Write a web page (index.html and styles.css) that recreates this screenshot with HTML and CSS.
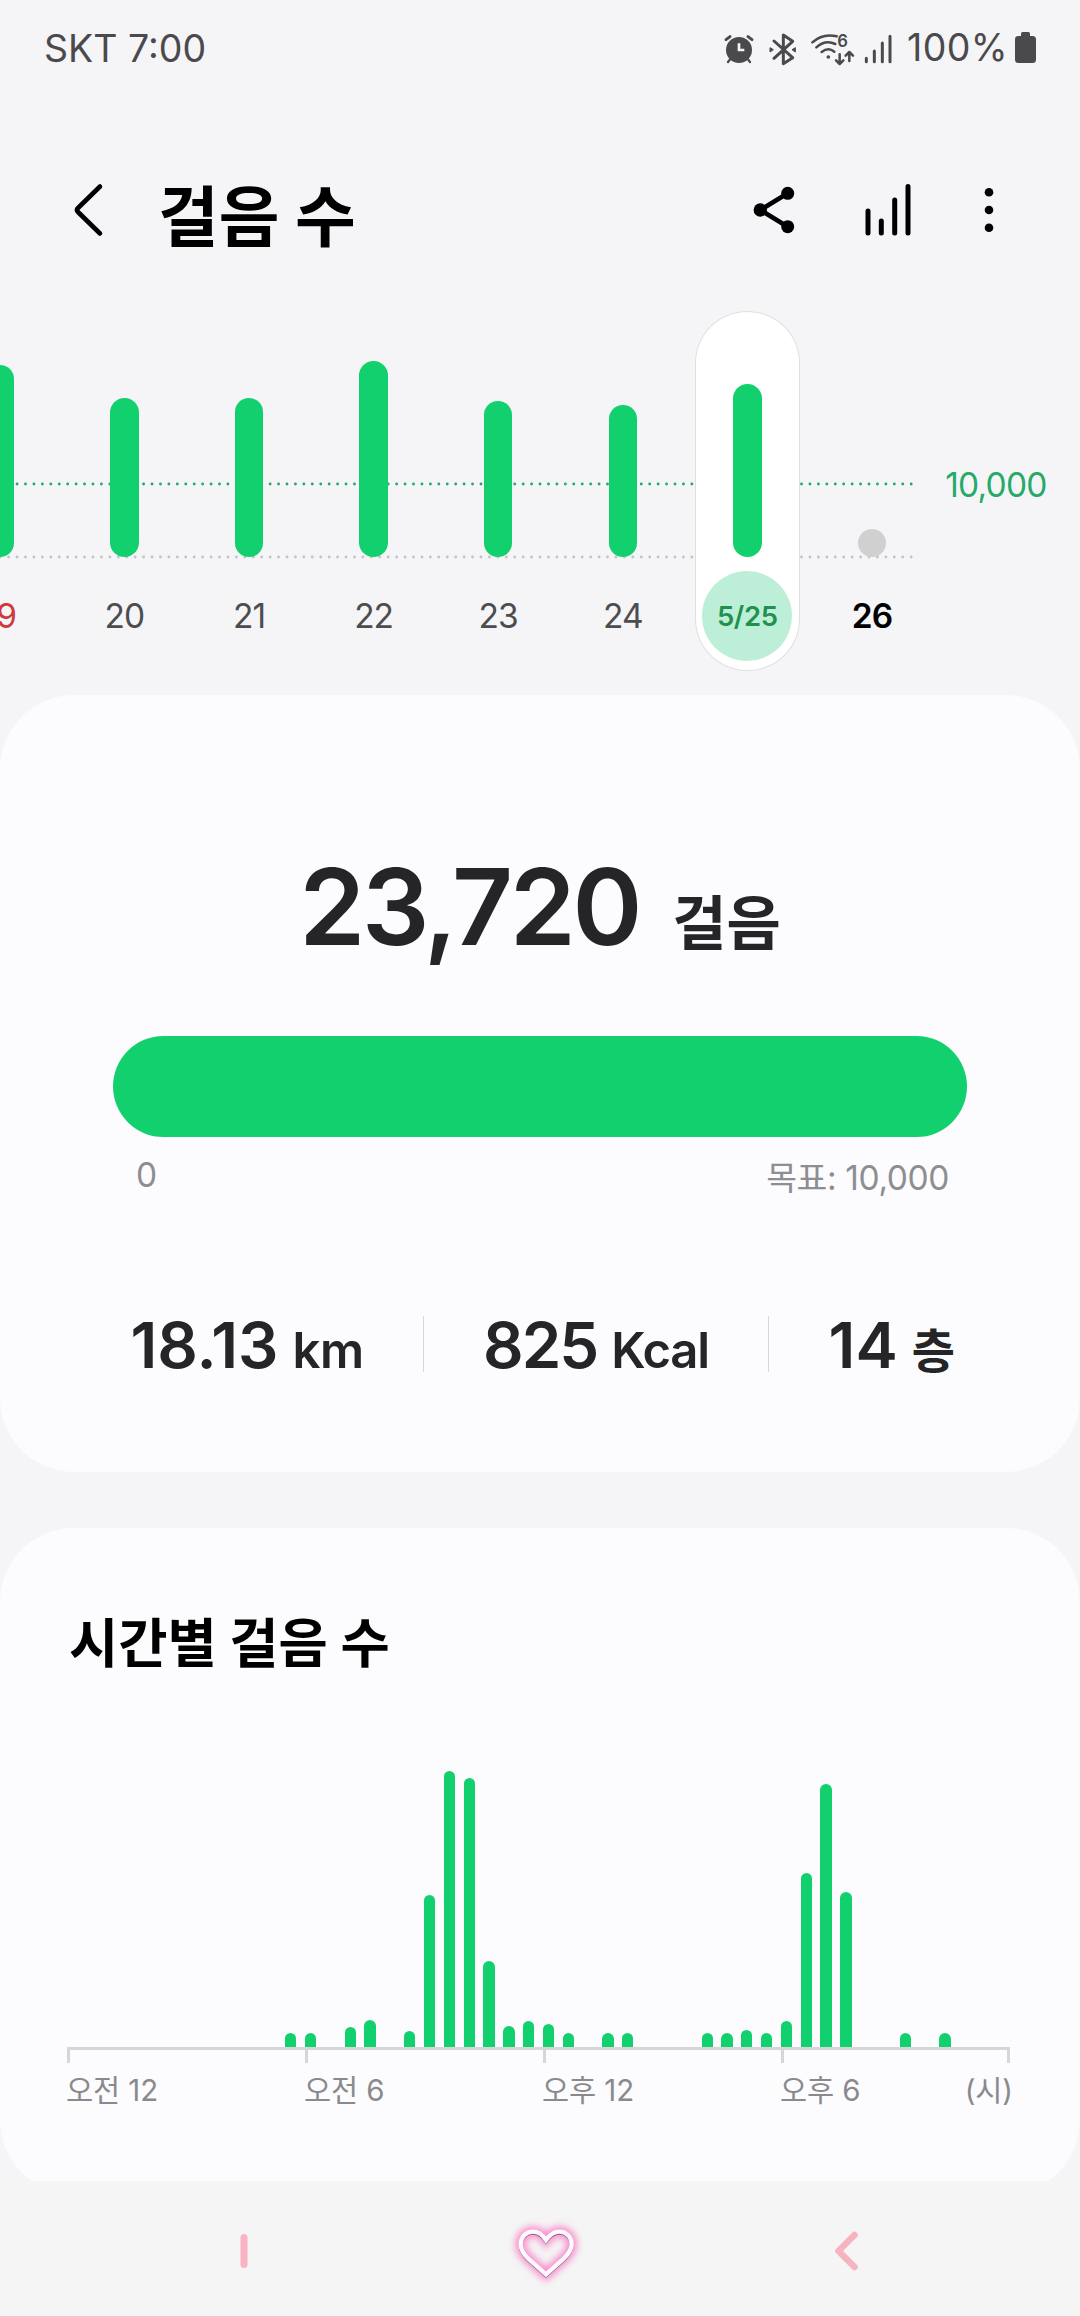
FILE: index.html
```html
<!DOCTYPE html>
<html lang="ko">
<head>
<meta charset="utf-8">
<title>걸음 수</title>
<link rel="stylesheet" href="styles.css">
</head>
<body>
<div class="screen">
  <div class="content">
    <div class="status">
      <span class="carrier">SKT 7:00</span>
      <div class="status-icons">
        <svg class="ic-alarm" width="30" height="35" viewBox="28 20 90 105">
          <circle cx="73" cy="74" r="39" fill="#4a4a4c"/>
          <path d="M73 54V74H89" fill="none" stroke="#f5f5f8" stroke-width="8"/>
          <path d="M34 43L46 34M100 34L112 43" fill="none" stroke="#4a4a4c" stroke-width="9" stroke-linecap="round"/>
          <path d="M46 102L40 110M100 102L106 110" fill="none" stroke="#4a4a4c" stroke-width="7" stroke-linecap="round"/>
        </svg>
        <svg class="ic-bt" width="30" height="35" viewBox="160 20 90 105">
          <path d="M178 47L234 97L206 115V29L234 48L178 99" fill="none" stroke="#4a4a4c" stroke-width="9" stroke-linecap="round" stroke-linejoin="round"/>
          <path d="M166 67L176 73L166 80ZM242 67L232 73L242 80Z" fill="#4a4a4c" stroke="#4a4a4c" stroke-width="3" stroke-linejoin="round"/>
        </svg>
        <svg class="ic-wifi" width="46" height="35" viewBox="286 20 138 105">
          <g fill="none" stroke="#4a4a4c" stroke-width="7.500" stroke-linecap="round" stroke-linejoin="round">
            <path d="M293 51C312 34 338 26 366 33"/>
            <path d="M305 66C322 51 343 47 362 56"/>
            <path d="M321 80C334 70 348 70 359 79"/>
            <path d="M375 87V115M364 105L375 116L386 105M404 107V80M393 91L404 80L415 91"/>
          </g>
          <circle cx="341" cy="95" r="5.500" fill="#4a4a4c"/>
          <text class="wifi-gen" x="368" y="66">6</text>
        </svg>
        <svg class="ic-signal" width="30" height="35" viewBox="445 20 90 105">
          <path d="M455 99V109M479 77V109M503 53V109M526 33V109" stroke="#4a4a4c" stroke-width="9" stroke-linecap="round"/>
        </svg>
        <span class="percent">100%</span>
        <svg class="ic-battery" width="21" height="31" viewBox="0 0 21 31">
          <rect x="6" y="0" width="9" height="8" rx="1.500" fill="#4a4a4c"/>
          <rect x="0" y="4" width="21" height="27" rx="3.500" fill="#4a4a4c"/>
        </svg>
      </div>
    </div>

    <header class="header">
      <svg class="back" width="32" height="56" viewBox="0 0 32 56">
        <path d="M28 4.500L6 26Q4 28 6 30L28 51.500" fill="none" stroke="#000" stroke-width="4.600" stroke-linecap="round" stroke-linejoin="round"/>
      </svg>
      <h1>걸음 수</h1>
      <div class="actions">
        <svg width="42" height="48" viewBox="0 0 42 48">
          <path d="M34.700 7.300L7.300 24L34.700 40.700" fill="none" stroke="#000" stroke-width="4.600"/>
          <circle cx="7.300" cy="24" r="6.700"/><circle cx="34.700" cy="7.300" r="6.500"/><circle cx="34.700" cy="40.700" r="6.500"/>
        </svg>
        <svg width="46" height="54" viewBox="0 0 46 54">
          <path d="M3 28V50M16.300 38V50M29.700 17V50M43 3.500V50" stroke="#000" stroke-width="5" stroke-linecap="round"/>
        </svg>
        <svg class="more" width="10" height="46" viewBox="0 0 10 46">
          <circle cx="5" cy="5.300" r="4.300"/><circle cx="5" cy="23" r="4.300"/><circle cx="5" cy="40.700" r="4.300"/>
        </svg>
      </div>
    </header>

    <section class="week">
      <svg class="guides" width="916" height="80" viewBox="0 0 916 80">
        <path d="M0.200 3H914" stroke="#22aa6d" stroke-width="2.900" stroke-linecap="round" stroke-dasharray="0 8.435"/>
        <path d="M0.200 76H914" stroke="#c4c4c7" stroke-width="2.900" stroke-linecap="round" stroke-dasharray="0 8.435"/>
      </svg>
      <div class="days">
        <div class="day sunday"><div class="plot"><i style="height:192px"></i></div><span>19</span></div>
        <div class="day"><div class="plot"><i style="height:159px"></i></div><span>20</span></div>
        <div class="day"><div class="plot"><i style="height:159.500px"></i></div><span>21</span></div>
        <div class="day"><div class="plot"><i style="height:196px"></i></div><span>22</span></div>
        <div class="day"><div class="plot"><i style="height:156px"></i></div><span>23</span></div>
        <div class="day"><div class="plot"><i style="height:152px"></i></div><span>24</span></div>
        <div class="day selected"><div class="plot"><i style="height:173px"></i></div><span>5/25</span></div>
        <div class="day today"><div class="plot"><i style="height:28.500px"></i></div><span>26</span></div>
      </div>
      <span class="goal-line">10,000</span>
    </section>

    <section class="card summary">
      <div class="total"><strong>23,720</strong><span>걸음</span></div>
      <div class="progress"></div>
      <div class="range"><span>0</span><span class="goal">목표: 10,000</span></div>
      <div class="stats">
        <div class="stat"><b>18.13</b><span>km</span></div>
        <div class="stat energy"><b>825</b><span>Kcal</span></div>
        <div class="stat"><b>14</b><span class="ko">층</span></div>
      </div>
    </section>

    <section class="card hourly">
      <h2>시간별 걸음 수</h2>
      <div class="bars">
        <i></i><i></i><i></i><i></i><i></i><i></i><i></i><i></i><i></i><i></i><i></i>
        <i style="height:14px"></i><i style="height:14px"></i><i></i><i style="height:20.500px"></i><i style="height:27.500px"></i><i></i>
        <i style="height:16.500px"></i><i style="height:152px"></i><i style="height:276.500px"></i><i style="height:269px"></i><i style="height:86.500px"></i>
        <i style="height:21.500px"></i><i style="height:26.500px"></i><i style="height:23.500px"></i><i style="height:14px"></i><i></i>
        <i style="height:14px"></i><i style="height:14px"></i><i></i><i></i><i></i>
        <i style="height:14px"></i><i style="height:14px"></i><i style="height:17px"></i><i style="height:14px"></i>
        <i style="height:26px"></i><i style="height:174px"></i><i style="height:263px"></i><i style="height:155.500px"></i><i></i><i></i>
        <i style="height:14px"></i><i></i><i style="height:14px"></i><i></i><i></i><i></i>
      </div>
      <div class="axis">
        <span>오전 12</span><span>오전 6</span><span>오후 12</span><span class="last">오후 6<em>(시)</em></span>
      </div>
    </section>
  </div>

  <nav class="nav">
    <div><svg width="8" height="36" viewBox="0 0 8 36"><path d="M4 4.500V31.500" stroke="#f9b4c4" stroke-width="7" stroke-linecap="round"/></svg></div>
    <div>
      <svg width="90" height="90" viewBox="0 0 270 270">
        <defs>
          <filter id="glow" x="-30%" y="-30%" width="160%" height="160%"><feGaussianBlur stdDeviation="11"/></filter>
          <filter id="shade" x="-30%" y="-30%" width="160%" height="160%"><feGaussianBlur stdDeviation="2"/></filter>
          <path id="heart" d="M138 102C126 84 112 77 99 77C78 77 62 93 62 116C62 132 72 145 84 157L138 205L192 157C204 145 215 132 215 116C215 93 199 77 178 77C165 77 151 84 138 102Z" fill="none" stroke-linejoin="miter"/>
        </defs>
        <use href="#heart" stroke="#f78fcd" stroke-width="33" filter="url(#glow)"/>
        <use href="#heart" y="4" stroke="#8a5f80" stroke-width="11" filter="url(#shade)"/>
        <use href="#heart" stroke="#fff8fe" stroke-width="13"/>
      </svg>
    </div>
    <div><svg width="26" height="42" viewBox="0 0 26 42"><path d="M21.500 5L5.500 21L21.500 37" fill="none" stroke="#f6b3c0" stroke-width="6.500" stroke-linecap="round" stroke-linejoin="round"/></svg></div>
  </nav>
</div>
</body>
</html>
```
FILE: styles.css
```css
* { box-sizing: border-box; margin: 0; padding: 0; }
body {
  width: 1080px;
  background: #f5f5f8;
  font-family: Inter, "Noto Sans CJK KR", sans-serif;
  color: #252528;
}
svg { display: block; flex: none; overflow: visible; }
i, em { font-style: normal; }
.screen { width: 1080px; height: 2316px; display: flex; flex-direction: column; overflow: hidden; }
.content { height: 2181px; overflow: hidden; }

/* status bar */
.status {
  height: 95px;
  padding: 0 44px 0 44px;
  display: flex;
  justify-content: space-between;
  font-size: 37.500px;
  line-height: 97px;
  color: #4a4a4c;
}
.carrier { letter-spacing: 0; }
.status-icons { display: flex; align-items: center; }
.ic-bt { margin-left: 14px; }
.ic-wifi { margin-left: 12px; }
.ic-signal { margin-left: 7px; }
.ic-alarm, .ic-bt, .ic-wifi, .ic-signal { margin-top: 3px; }
.wifi-gen { font: 600 50px Inter, sans-serif; fill: #4a4a4c; }
.percent { width: 101px; margin-left: 14px; letter-spacing: 0.4px; white-space: nowrap; }
.ic-battery { margin-left: 7px; }

/* title bar */
.header { height: 200px; margin-top: 15px; padding: 0 86px 0 72px; display: flex; align-items: center; }
h1 { margin-left: 54px; padding-top: 13px; font-size: 66px; line-height: 90px; font-weight: 700; color: #000; }
.actions { margin-left: auto; display: flex; align-items: center; gap: 70px; }
.more { margin-left: 3px; }

/* daily strip */
.week { position: relative; height: 361px; display: flex; overflow: hidden; }
.guides { position: absolute; left: 0; top: 171px; }
.days { position: relative; flex: none; display: grid; grid-template-columns: repeat(8, 124.6px); margin-left: -62.500px; }
.day {
  height: 361px;
  margin: 0 10px;
  display: flex;
  flex-direction: column;
  align-items: center;
  font-size: 33.500px;
  color: #4d4d50;
}
.plot { height: 247px; display: flex; align-items: flex-end; }
.plot i { width: 28.500px; border-radius: 15px; background: #11d06d; }
.day span { width: 90px; height: 90px; margin-top: 14px; line-height: 91px; text-align: center; letter-spacing: -1px; }
.sunday span { color: #d0393c; }
.day.selected { height: 360px; margin-top: 1px; background: #fff; border-radius: 52px; box-shadow: inset 0 0 0 1px #dfdfe2; }
.selected .plot { height: 246px; }
.day.selected span { border-radius: 50%; background: #bdefd8; color: #20914e; font-size: 27.500px; font-weight: 600; letter-spacing: -0.3px; }
.today .plot i { background: #d0d0d1; }
.today span { font-weight: 600; color: #000; }
.goal-line { padding-top: 155px; margin-left: 11px; font-size: 33.500px; line-height: 40px; letter-spacing: -0.8px; color: #27a969; }

/* cards */
.card { background: #fcfcfe; border-radius: 74px; }
.summary { height: 777px; margin-top: 24px; padding-top: 152px; }
.total { display: flex; justify-content: center; align-items: baseline; line-height: 120px; height: 120px; }
.total strong { font-size: 106px; font-weight: 600; letter-spacing: -3.300px; }
.total span { margin-left: 33px; font-size: 59px; font-weight: 700; }
.progress { height: 101px; margin: 69px 113px 0; border-radius: 51px; background: #11d06d; }
.range {
  height: 47px;
  margin: 16px 131px 0 136px;
  display: flex;
  justify-content: space-between;
  font-size: 33.500px;
  line-height: 45px;
  letter-spacing: -0.4px;
  color: #8e8e91;
}
.goal { padding-top: 3px; }
.stats { margin-top: 116px; padding: 0 65px 0 71px; display: grid; grid-template-columns: 352px 345px 246px; }
.stat { height: 56px; display: flex; justify-content: center; align-items: baseline; line-height: 58px; font-weight: 600; }
.stat + .stat { border-left: 1px solid #d6d6d9; }
.stat b { font-size: 63.500px; font-weight: 600; letter-spacing: 0; }
.stat span { margin-left: 14px; font-size: 49px; letter-spacing: -0.5px; }
.energy b { letter-spacing: -2px; }
.energy span { letter-spacing: -1.200px; }
.stat .ko { font-size: 47px; font-weight: 700; }

.hourly { height: 666px; margin-top: 56px; padding: 81px 70px 0 67px; }
h2 { margin-left: 2px; font-size: 53.500px; line-height: 70px; height: 70px; font-weight: 700; color: #000; }
.bars { height: 368px; margin-right: -0.7px; display: flex; justify-content: space-between; align-items: flex-end; }
.bars i { width: 11.300px; border-radius: 6px 6px 0 0; background: #11d06d; }
.axis {
  display: grid;
  grid-template-columns: repeat(3, 238px) 1fr;
  border-top: 3px solid #d6d6d9;
  font-size: 29.500px;
  line-height: 40px;
  letter-spacing: -0.1px;
  text-indent: -1px;
  color: #8a8a8d;
}
.axis span {
  padding-top: 20px;
  background: linear-gradient(#d6d6d9, #d6d6d9) left top / 3px 13px no-repeat;
}
.axis .last {
  display: flex;
  justify-content: space-between;
  background: linear-gradient(#d6d6d9, #d6d6d9) left top / 3px 13px no-repeat, linear-gradient(#d6d6d9, #d6d6d9) right top / 3px 13px no-repeat;
}
.axis em { margin-right: -3px; }

/* navigation bar */
.nav { height: 135px; background: #f5f5f5; display: grid; grid-template-columns: repeat(3, 301px); justify-content: center; padding-left: 9px; }
.nav div { display: flex; justify-content: center; align-items: center; padding-top: 4px; }
```
